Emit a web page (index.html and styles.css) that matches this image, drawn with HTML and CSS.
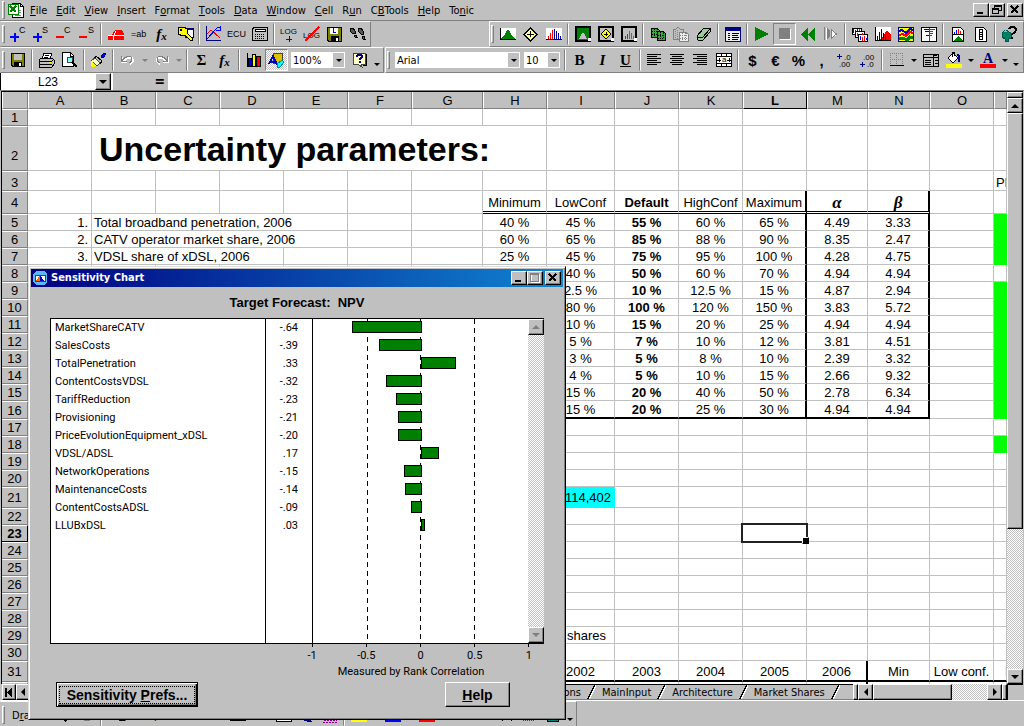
FILE: index.html
```html
<!DOCTYPE html>
<html lang="en">
<head>
<meta charset="utf-8">
<title>Sensitivity Chart</title>
<link rel="stylesheet" href="styles.css">
</head>
<body>
<header class="menubar">
  <i class="grip"></i>
  <svg class="book" width="18" height="16" viewBox="0 0 18 16"><path d="M5 1h8l3 3v11H5z" fill="#fff" stroke="#000"/><path d="M13 1v3h3" fill="none" stroke="#000"/><path d="M1 2h10v10H1z" fill="#fff" stroke="#008000"/><path d="M3 4l6 6M9 4l-6 6" stroke="#008000" stroke-width="2"/><path d="M12 8h2M12 10h2M8 13h6" stroke="#808080"/></svg>
  <nav class="menus">
    <button><u>F</u>ile</button><button><u>E</u>dit</button><button><u>V</u>iew</button><button><u>I</u>nsert</button><button>F<u>o</u>rmat</button><button><u>T</u>ools</button><button><u>D</u>ata</button><button><u>W</u>indow</button><button><u>C</u>ell</button><button>R<u>u</u>n</button><button>C<u>B</u>Tools</button><button><u>H</u>elp</button><button>To<u>n</u>ic</button>
  </nav>
  <div class="winbtns">
    <button aria-label="Minimize" class="bevel"><svg width="12" height="10"><path d="M2 7h6v2H2z"/></svg></button>
    <button aria-label="Restore" class="bevel"><svg width="12" height="10"><path d="M4 .5h6v5H8M4 1.5h6M3.5 0v3M1.500 3.500h6v5h-6zM1 4.500h7" fill="none" stroke="#000"/></svg></button>
    <button aria-label="Close" class="bevel gap"><svg width="12" height="10"><path d="M2 1l7 7M9 1L2 8" stroke="#000" stroke-width="2"/></svg></button>
  </div>
</header>

<div class="toolrow">
  <div class="toolbar">
    <i class="grip"></i>
    <button class="tb" aria-label="Add C"><svg width="18" height="18"><path d="M1 12h9M5.500 8v9" stroke="#00f" stroke-width="2"/><text x="10" y="8" class="t9">C</text></svg></button>
    <button class="tb" aria-label="Add S"><svg width="18" height="18"><path d="M1 12h9M5.500 8v9" stroke="#00f" stroke-width="2"/><text x="10" y="8" class="t9">S</text></svg></button>
    <button class="tb" aria-label="Remove C"><svg width="18" height="18"><path d="M1 12h8" stroke="red" stroke-width="2"/><text x="9" y="8" class="t9">C</text></svg></button>
    <button class="tb" aria-label="Remove S"><svg width="18" height="18"><path d="M1 12h8" stroke="red" stroke-width="2"/><text x="10" y="8" class="t9">S</text></svg></button>
    <i class="sep"></i>
    <button class="tb" aria-label="Fill block"><svg width="16" height="16"><path d="M7 4h7l2 4v6H0V9h4z" fill="red"/><path d="M0 9h16M5 9v5M8 5l-2 4" stroke="#fff"/></svg></button>
    <button class="tb" aria-label="Label"><svg width="18" height="16"><text x="1" y="11" class="t9">=ab</text></svg></button>
    <button class="tb fx" aria-label="Function">f<small>x</small></button>
    <button class="tb" aria-label="Key"><svg width="18" height="16"><path d="M9 2h8v9H9z" fill="#fff" stroke="#000080"/><path d="M10 3h7" stroke="#000080" stroke-width="2"/><path d="M2 1h6l3 2v4l5 5v2h-2l-5-5-2 1-5-2z" fill="#ff0" stroke="#000"/><path d="M4 3h2v2H4z"/></svg></button>
    <i class="sep"></i>
    <button class="tb" aria-label="Line chart"><svg width="17" height="16"><path d="M1.500 0v14.500H16" stroke="#000080" fill="none"/><path d="M2 8l4-4 9 8" stroke="red" fill="none"/><path d="M2 13L12 2l3-1M11 4h4V0" stroke="#00f" fill="none"/></svg></button>
    <button class="tb ecu" aria-label="ECU">ECU</button>
    <button class="tb" aria-label="Calculator"><svg width="16" height="14"><path d="M2 .5h13v13H.5V2z" fill="#c0c0c0" stroke="#000"/><path d="M3 2.500h10v2H3z" fill="#fff" stroke="#000"/><path d="M3 7h10M3 9h10M3 11h10" stroke="#000" stroke-dasharray="1 1"/></svg></button>
    <i class="sep"></i>
    <button class="tb" aria-label="Add log"><svg width="22" height="17"><text x="2" y="8" class="t8">LOG</text><path d="M8 13h6M11 10v6" stroke="#00f"/></svg></button>
    <button class="tb" aria-label="Remove log"><svg width="22" height="16"><text x="2" y="12" class="t8">LOG</text><path d="M4 15L18 1" stroke="red" stroke-width="2"/></svg></button>
    <button class="tb" aria-label="Save log"><svg width="15" height="15"><path d="M.5.500h14v14H2L.5 13z" fill="#808000" stroke="#000"/><path d="M3 1h8v6H3z" fill="#fff"/><path d="M4 9h8v6H4z"/><path d="M6 1v4h3" fill="none" stroke="#00f"/><path d="M9 11h2v3H9z" fill="#fff"/></svg></button>
    <button class="tb" aria-label="Trace"><svg width="17" height="15"><path d="M2 1h2l2 3v2H3L1 4zM5 8h2l1 2H6zM9 1h3l2 3v3h-2L9 4zM13 9h2l1 3h-2z" fill="#555" stroke="#000"/></svg></button>
  </div>
  <div class="toolbar right">
    <i class="grip"></i>
    <button class="tb" aria-label="Define assumption"><svg width="16" height="13"><path d="M0 0h16v11H0z" fill="#fff"/><path d="M0 11c5-1 5-9 8-9s3 8 8 9z" fill="#008000"/><path d="M.5 0v11.500H16" stroke="#000" fill="none"/></svg></button>
    <button class="tb" aria-label="Define decision"><svg width="15" height="15"><path d="M7.500 1L14 7.500 7.500 14 1 7.500z" fill="#ff8" stroke="#000"/><path d="M4 7h7M7.500 4v6" fill="none" stroke="#000"/></svg></button>
    <button class="tb" aria-label="Define forecast"><svg width="16" height="13"><path d="M0 0h16v11H0z" fill="#fff"/><path d="M2 8h1v3H2zM4 5h1v6H4zM6 2h1v9H6z" fill="#f00"/><path d="M8 1h1v10H8zM10 3h1v8h-1zM12 5h1v6h-1zM14 8h1v3h-1z" fill="#0000a0"/><path d="M0 11h16v1H0z"/></svg></button>
    <i class="sep"></i>
    <button class="tb" aria-label="Select assumptions"><svg width="16" height="16"><path d="M1 1h14v14H1z" fill="#008000" stroke="#000" stroke-width="2"/><path d="M3 13c3-1 3-6 5-6s2 5 5 6z" fill="#c0c0c0"/><path d="M13 12h3v3h-3z" fill="#fff"/></svg></button>
    <button class="tb" aria-label="Select decisions"><svg width="16" height="16"><path d="M1 1h14v14H1z" fill="#c0c0c0" stroke="#000" stroke-width="2"/><path d="M8 3l5 5-5 5-5-5z" fill="#ff0" stroke="#000"/><path d="M6 8h4M8 6v4" stroke="#000"/><path d="M13 12h3v3h-3z" fill="#fff"/></svg></button>
    <button class="tb" aria-label="Select forecasts"><svg width="16" height="16"><path d="M1 1h14v14H1z" fill="#c0c0c0" stroke="#000" stroke-width="2"/><path d="M4 10h1v3H4zM6 8h1v5H6z" fill="#008000"/><path d="M8 5h1v8H8zM10 7h1v6h-1zM12 10h1v3h-1z" fill="#f0f"/><path d="M13 12h3v3h-3z" fill="#fff"/></svg></button>
    <i class="sep"></i>
    <button class="tb" aria-label="Copy data"><svg width="16" height="14"><path d="M1 1h5l3 2v7H1z" fill="#3a3" stroke="#000"/><path d="M7 4h5l3 2v7H7z" fill="#3a3" stroke="#000"/><path d="M2 4h6M2 7h5M4 2v7M8 8h6M8 11h6M10 5v7M13 6v6" stroke="#000" stroke-dasharray="1 1"/></svg></button>
    <button class="tb" aria-label="Paste data"><svg width="17" height="16"><path d="M1 3h3l2-2 2 2h3v10H1z" fill="#c0c0c0" stroke="#808080"/><path d="M7 6h6l3 2v7H7z" fill="#eee" stroke="#808080"/><path d="M3 5v7M5 4v9M8 9h7M8 12h7M10 7v8M13 7v8" stroke="#808080" stroke-dasharray="1 1"/></svg></button>
    <button class="tb" aria-label="Clear data"><svg width="16" height="14"><path d="M1 9l7-8h6v4l-7 8H2z" fill="#9c9" stroke="#000"/><path d="M2 10h5l7-8" fill="none" stroke="#000"/></svg></button>
    <i class="sep"></i>
    <button class="tb" aria-label="Preferences"><svg width="16" height="15"><path d="M.5.500h15v14H.5z" fill="#eee" stroke="#000080"/><path d="M0 2h16" stroke="#000080" stroke-width="3"/><path d="M3 6h2M7 6h7M3 8h2M7 8h6M3 10h2M7 10h7M3 12h2M7 12h6" stroke="#000"/></svg></button>
    <i class="sep"></i>
    <button class="tb" aria-label="Run"><svg width="15" height="14"><path d="M1 0l14 7-14 7z" fill="#008000"/></svg></button>
    <button class="tb pressed" aria-label="Stop"><svg width="12" height="12"><path d="M1 1h11v11H1z" fill="#fff"/><path d="M0 0h11v11H0z" fill="#808080"/></svg></button>
    <button class="tb" aria-label="Reset"><svg width="14" height="13"><path d="M7 0v13L0 6.500zM14 0v13L7 6.500z" fill="#008000"/></svg></button>
    <button class="tb" aria-label="Single step"><svg width="15" height="14"><path d="M3 1v12M8 4l6 3-6 4z" stroke="#fff" fill="#fff"/><path d="M1.500 0v13M4 1v11l2-2V3z" stroke="#808080" fill="#808080"/><path d="M8.500 3v8l5-4z" stroke="#808080" fill="none"/></svg></button>
    <i class="sep"></i>
    <button class="tb" aria-label="Forecast windows"><svg width="16" height="15"><g fill="#fff" stroke="#000"><path d="M.5 1.500h9v6h-9z"/><path d="M3.500 4.500h9v6h-9z"/><path d="M6.500 7.500h9v7h-9z"/></g><path d="M1 2h1v4H1zM3 3h1v3H3zM5 2h1v2H5zM8 9h1v4H8zM14 11h1v2h-1z" fill="#00f"/><path d="M7 2h1v2H7zM5 6h1v3H5zM10 6h1v2h-1zM10 10h1v4h-1zM12 9h1v5h-1z" fill="#f00"/></svg></button>
    <button class="tb" aria-label="Overlay chart"><svg width="16" height="14"><path d="M0 0h16v13H0z" fill="#fff"/><path d="M5 13c3-2 5-9 7-9s2 2 4 3v6z" fill="red"/><path d="M2 9h1v4H2zM4 5h1v8H4zM6 2h1v11H6zM8 6h1v7H8zM10 8h1v5h-1z" fill="#000080"/><path d="M.5 0v13.500H16" stroke="#000" fill="none"/></svg></button>
    <button class="tb" aria-label="Trend chart"><svg width="16" height="15"><path d="M.5.500h15v14H.5z" fill="#ff0" stroke="#000080"/><path d="M1 4l3-1 4 3 4-4 3 1" stroke="#00f" stroke-width="2" fill="none"/><path d="M1 8l4-1 3 2 4-4 3 1" stroke="red" stroke-width="2" fill="none"/><path d="M1 12l4-1 4 2 3-3 3 1" stroke="#008000" stroke-width="3" fill="none"/></svg></button>
    <button class="tb" aria-label="Sensitivity chart"><svg width="16" height="15"><path d="M.5.500h15v14H.5z" fill="#fff" stroke="#000"/><path d="M3 2.500h5M4 4.500h4M5 8.500h3" stroke="#000080"/><path d="M9 2.500h5M9 4.500h3M9 6.500h3M9 8.500h2" stroke="#008000"/><path d="M8.500 1v13" stroke="#008000"/></svg></button>
    <i class="sep"></i>
    <button class="tb" aria-label="Create report"><svg width="12" height="15"><path d="M.5.500h8l3 3v11H.5z" fill="#fff" stroke="#000"/><path d="M2 5h1v2H2zM4 3h1v4H4z" fill="#00f"/><path d="M6 2h1v5H6zM8 4h1v3H8z" fill="#f00"/><path d="M1 7.500h10" stroke="#000"/><path d="M1 14l5-5 5 5z" fill="#008000"/></svg></button>
    <button class="tb" aria-label="Extract data"><svg width="12" height="15"><path d="M.5.500h8l3 3v11H.5z" fill="#fff" stroke="#000"/><path d="M4.500 2.500v10h3v-10zM4 5.500h4M4 7.500h4M4 9.500h4" fill="none" stroke="#000"/></svg></button>
    <i class="sep"></i>
    <button class="tb" aria-label="Help"><svg width="17" height="16"><path d="M1 7l4-3 5 3v5l-3 1v2H4v-2L1 11z" fill="#008060" stroke="#055"/><path d="M2 6l2-2 3 2z" fill="#0ff"/><path d="M8 3c1-3 7-3 7 1 0 3-4 3-4 5M11 11v2" fill="none" stroke="#000" stroke-width="2"/></svg></button>
  </div>
</div>

<div class="toolrow">
  <div class="toolbar">
    <i class="grip"></i>
    <button class="tb" aria-label="Save"><svg width="14" height="14"><path d="M.5.500h13v13H2L.5 12z" fill="#808000" stroke="#000"/><path d="M3 1h8v6H3z" fill="#c0c0c0"/><path d="M3 9h8v5H3z"/><path d="M8 10h2v3H8z" fill="#fff"/></svg></button>
    <i class="sep"></i>
    <button class="tb" aria-label="Print"><svg width="17" height="16"><path d="M4 7l2-6h8l-2 6z" fill="#fff" stroke="#000"/><path d="M1 8l2-2h11l2 2v4l-2 3H1z" fill="#c0c0c0" stroke="#000"/><path d="M1 9h13l2-2M1 12h13M7 3h4M6 5h4" stroke="#000" fill="none"/><path d="M11 10h2v1h-2z" fill="#ff0"/></svg></button>
    <button class="tb" aria-label="Print preview"><svg width="17" height="16"><path d="M1.500.500h8l3 3v11h-11z" fill="#fff" stroke="#000"/><path d="M9 1v3h3" fill="none" stroke="#000"/><circle cx="9" cy="8" r="3" fill="#8ff" stroke="#444"/><path d="M11 10l5 5" stroke="#000" stroke-width="2"/></svg></button>
    <i class="sep"></i>
    <button class="tb" aria-label="Format painter"><svg width="17" height="16"><path d="M11 5l3-4 2 1-3 4z" fill="#00f" stroke="#000080"/><path d="M6 4l6 5-2 3-6-5z" fill="#c0c0c0" stroke="#000"/><path d="M5 6l5 5-3 3-6-5z" fill="#ffc" stroke="#444"/><path d="M1 9l5 5-3 1-2-1" fill="#ff0"/></svg></button>
    <i class="sep"></i>
    <button class="tb" aria-label="Undo"><svg width="15" height="10"><path d="M2 2v5h5M3 7c3-5 9-6 10-2 0 2-1 3-3 4" fill="none" stroke="#fff" stroke-width="2"/><path d="M1.500 1v5h5M2 6c3-5 9-6 10-2 0 2-1 3-3 4" fill="none" stroke="#808080"/></svg></button>
    <button class="drop off" aria-label="Undo list"></button>
    <button class="tb" aria-label="Redo"><svg width="15" height="10"><path d="M14 2v5H9M13 7C10 2 4 1 3 5c0 2 1 3 3 4" fill="none" stroke="#fff" stroke-width="2"/><path d="M13.500 1v5h-5M13 6C10 1 4 0 3 4c0 2 1 3 3 4" fill="none" stroke="#808080"/></svg></button>
    <button class="drop off" aria-label="Redo list"></button>
    <i class="sep"></i>
    <button class="tb sigma" aria-label="AutoSum">Σ</button>
    <button class="tb fx" aria-label="Paste function">f<small>x</small></button>
    <i class="sep"></i>
    <button class="tb" aria-label="Chart wizard"><svg width="16" height="16"><path d="M1 1v13h14" fill="none" stroke="#000"/><path d="M2.500 6.500h3v8h-3z" fill="#00f" stroke="#000"/><path d="M6.500 2.500h3v12h-3z" fill="#ff0" stroke="#000"/><path d="M10.500 4.500h4v10h-4z" fill="red" stroke="#000"/></svg></button>
    <button class="tb pressed dither" aria-label="Drawing"><svg width="17" height="16"><path d="M5 2l2-1h7v8l-2 2H5z" fill="#e0c000" stroke="#444"/><path d="M1 12L5 4l4 9M2 10h6" fill="none" stroke="#0000c0" stroke-width="2"/><path d="M9 12l5-4 2 2-4 5H9z" fill="#0ff" stroke="#088"/></svg></button>
    <span class="combo zoom"><select aria-label="Zoom"><option>100%</option></select><i></i></span>
    <button class="tb" aria-label="Office assistant"><svg width="15" height="16"><path d="M1 1h12v11H9l1 3-4-3H1z" fill="#ffc" stroke="#444"/><path d="M14 2v11h-3" fill="none" stroke="#000"/><path d="M5 5c0-3 5-3 5 0 0 1-2 1-2 3M8 9v2" fill="none" stroke="#000080" stroke-width="2"/></svg></button>
    <button class="drop low" aria-label="More buttons"></button>
  </div>
  <div class="toolbar grow">
    <i class="grip"></i>
    <span class="combo font"><select aria-label="Font"><option>Arial</option></select><i></i></span>
    <span class="combo size"><select aria-label="Font size"><option>10</option></select><i></i></span>
    <i class="sep"></i>
    <button class="tb serif" aria-label="Bold"><b>B</b></button>
    <button class="tb serif" aria-label="Italic"><em>I</em></button>
    <button class="tb serif" aria-label="Underline"><u>U</u></button>
    <i class="sep"></i>
    <button class="tb" aria-label="Align left"><svg width="15" height="12"><path d="M0 .5h14M0 2.500h10M0 4.500h14M0 6.500h10M0 8.500h14M0 10.500h10" stroke="#000"/></svg></button>
    <button class="tb" aria-label="Center"><svg width="15" height="12"><path d="M0 .5h14M2 2.500h10M0 4.500h14M2 6.500h10M0 8.500h14M2 10.500h10" stroke="#000"/></svg></button>
    <button class="tb" aria-label="Align right"><svg width="15" height="12"><path d="M0 .5h14M4 2.500h10M0 4.500h14M4 6.500h10M0 8.500h14M4 10.500h10" stroke="#000"/></svg></button>
    <button class="tb" aria-label="Merge and center"><svg width="16" height="14"><path d="M.5.500h15v13H.5z" fill="#fff" stroke="#000"/><path d="M0 3.500h16M0 10.500h16M5.500 0v3M10.500 0v3M5.500 11v3M10.500 11v3M1 7h4M11 7h4M3 5v4M13 5v4" stroke="#000"/><text x="6" y="9" class="t8">a</text></svg></button>
    <i class="sep"></i>
    <button class="tb num">$</button>
    <button class="tb num">€</button>
    <button class="tb num">%</button>
    <button class="tb num">,</button>
    <button class="tb" aria-label="Increase decimal"><svg width="17" height="15"><path d="M1 3.500h5M3.500 1v5" stroke="#000080"/><text x="8" y="7" class="t8">.0</text><text x="3" y="14" class="t8">.00</text></svg></button>
    <button class="tb" aria-label="Decrease decimal"><svg width="17" height="15"><path d="M1 11.500h5M3.500 9v5" stroke="#000080"/><text x="4" y="7" class="t8">.00</text><text x="8" y="14" class="t8">.0</text></svg></button>
    <i class="sep"></i>
    <button class="tb" aria-label="Borders"><svg width="14" height="14"><path d="M.5 0v13M6.500 0v13M12.500 0v13M0 .5h13M0 6.500h13" stroke="#808080" stroke-dasharray="1 1"/><path d="M0 12.500h14" stroke="#000"/></svg></button>
    <button class="drop" aria-label="Border styles"></button>
    <button class="tb" aria-label="Controls"><svg width="16" height="14"><path d="M.5 1.500h15v12H.5z" fill="#c0c0c0" stroke="#000"/><path d="M0 4.500h16M10.500 1v12M2 7.500h6M2 9.500h6M2 11.500h6M11 2.500h3M12 7.500h3M12 10.500h3" stroke="#000"/></svg></button>
    <button class="tb" aria-label="Fill color"><svg width="16" height="16"><path d="M2 6l5-5 5 5-5 5z" fill="#fff" stroke="#000"/><path d="M6 5V0h2v4" fill="none" stroke="#000"/><path d="M11 2c3 0 4 3 3 8h-2V6z" fill="#000080"/><path d="M0 12h16v4H0z" fill="#ff0"/></svg></button>
    <button class="drop" aria-label="Fill colors"></button>
    <button class="tb" aria-label="Font color"><svg width="16" height="16"><text x="3" y="11" class="bigA">A</text><path d="M0 12h16v4H0z" fill="red"/></svg></button>
    <button class="drop" aria-label="Font colors"></button>
    <button class="drop low" aria-label="More buttons"></button>
  </div>
</div>

<div class="formula">
  <input class="name" aria-label="Name box" value="L23">
  <button class="namedrop bevel" aria-label="Names"><i class="arr down"></i></button>
  <button class="eq">=</button>
  <input class="fx-in" aria-label="Formula">
</div>

<main class="work">
  <div class="sheet">
  <table class="grid">
    <colgroup><col class="c26"><col class="c64"><col class="c64"><col class="c64"><col class="c64"><col class="c64"><col class="c64"><col class="c71"><col class="c64"><col class="c68"><col class="c64"><col class="c64"><col class="c64"><col class="c61"><col class="c62"><col class="c64"><col></colgroup>
    <thead><tr><th></th><th>A</th><th>B</th><th>C</th><th>D</th><th>E</th><th>F</th><th>G</th><th>H</th><th>I</th><th>J</th><th>K</th><th class="on">L</th><th>M</th><th>N</th><th>O</th><th></th></tr></thead>
    <tbody>
    <tr><th>1</th><td><td><td><td><td><td><td><td><td><td><td><td><td><td><td><td></tr>
    <tr class="h45"><th>2</th><td></td><td colspan="7" class="title">Uncertainty parameters:</td><td><td><td><td><td><td><td><td></tr>
    <tr class="h20"><th>3</th><td><td><td><td><td><td><td><td><td><td><td><td><td><td><td><td class="l">Pl</td></tr>
    <tr class="h23 heads"><th>4</th><td><td><td><td><td><td><td><td class="d">Minimum</td><td class="d">LowConf</td><td class="d"><b>Default</b></td><td class="d">HighConf</td><td class="d k">Maximum</td><td class="d greek">α</td><td class="d k greek">β</td><td><td></tr>
    <tr><th>5</th><td class="r">1.</td><td colspan="4" class="l">Total broadband penetration, 2006</td><td><td><td>40 %</td><td>45 %</td><td><b>55 %</b></td><td>60 %</td><td class="k">65 %</td><td>4.49</td><td class="k">3.33</td><td><td class="g"></tr>
    <tr><th>6</th><td class="r">2.</td><td colspan="4" class="l">CATV operator market share, 2006</td><td><td><td>60 %</td><td>65 %</td><td><b>85 %</b></td><td>88 %</td><td class="k">90 %</td><td>8.35</td><td class="k">2.47</td><td><td class="g"></tr>
    <tr><th>7</th><td class="r">3.</td><td colspan="3" class="l">VDSL share of xDSL, 2006</td><td><td><td><td>25 %</td><td>45 %</td><td><b>75 %</b></td><td>95 %</td><td class="k">100 %</td><td>4.28</td><td class="k">4.75</td><td><td class="g"></tr>
    <tr><th>8</th><td><td><td><td><td><td><td><td><td>40 %</td><td><b>50 %</b></td><td>60 %</td><td class="k">70 %</td><td>4.94</td><td class="k">4.94</td><td><td></tr>
    <tr><th>9</th><td><td><td><td><td><td><td><td><td>2.5 %</td><td><b>10 %</b></td><td>12.5 %</td><td class="k">15 %</td><td>4.87</td><td class="k">2.94</td><td><td class="g"></tr>
    <tr><th>10</th><td><td><td><td><td><td><td><td><td>80 %</td><td><b>100 %</b></td><td>120 %</td><td class="k">150 %</td><td>3.83</td><td class="k">5.72</td><td><td class="g"></tr>
    <tr><th>11</th><td><td><td><td><td><td><td><td><td>10 %</td><td><b>15 %</b></td><td>20 %</td><td class="k">25 %</td><td>4.94</td><td class="k">4.94</td><td><td class="g"></tr>
    <tr><th>12</th><td><td><td><td><td><td><td><td><td>5 %</td><td><b>7 %</b></td><td>10 %</td><td class="k">12 %</td><td>3.81</td><td class="k">4.51</td><td><td class="g"></tr>
    <tr><th>13</th><td><td><td><td><td><td><td><td><td>3 %</td><td><b>5 %</b></td><td>8 %</td><td class="k">10 %</td><td>2.39</td><td class="k">3.32</td><td><td class="g"></tr>
    <tr><th>14</th><td><td><td><td><td><td><td><td><td>4 %</td><td><b>5 %</b></td><td>10 %</td><td class="k">15 %</td><td>2.66</td><td class="k">9.32</td><td><td class="g"></tr>
    <tr><th>15</th><td><td><td><td><td><td><td><td><td>15 %</td><td><b>20 %</b></td><td>40 %</td><td class="k">50 %</td><td>2.78</td><td class="k">6.34</td><td><td class="g"></tr>
    <tr class="h18"><th>16</th><td><td><td><td><td><td><td><td class="u"><td class="u">15 %</td><td class="u"><b>20 %</b></td><td class="u">25 %</td><td class="u k">30 %</td><td class="u">4.94</td><td class="u k">4.94</td><td><td class="g"></tr>
    <tr><th>17</th><td><td><td><td><td><td><td><td><td><td><td><td><td><td><td><td></tr>
    <tr><th>18</th><td><td><td><td><td><td><td><td><td><td><td><td><td><td><td><td class="g"></tr>
    <tr><th>19</th><td><td><td><td><td><td><td><td><td><td><td><td><td><td><td><td></tr>
    <tr><th>20</th><td><td><td><td><td><td><td><td><td><td><td><td><td><td><td><td></tr>
    <tr class="h21"><th>21</th><td><td><td><td><td><td><td><td><td class="r cyan">114,402</td><td><td><td><td><td><td><td></tr>
    <tr><th>22</th><td><td><td><td><td><td><td><td><td><td><td><td><td><td><td><td></tr>
    <tr><th class="on">23</th><td><td><td><td><td><td><td><td><td><td><td><td class="cursor"><td><td><td><td></tr>
    <tr><th>24</th><td><td><td><td><td><td><td><td><td><td><td><td><td><td><td><td></tr>
    <tr><th>25</th><td><td><td><td><td><td><td><td><td><td><td><td><td><td><td><td></tr>
    <tr><th>26</th><td><td><td><td><td><td><td><td><td><td><td><td><td><td><td><td></tr>
    <tr><th>27</th><td><td><td><td><td><td><td><td><td><td><td><td><td><td><td><td></tr>
    <tr><th>28</th><td><td><td><td><td><td><td><td><td><td><td><td><td><td><td><td></tr>
    <tr><th>29</th><td><td><td><td><td><td><td><td><td class="r wide">shares</td><td><td><td><td><td><td><td></tr>
    <tr><th>30</th><td><td><td><td><td><td><td><td><td><td><td><td><td><td><td><td></tr>
    <tr class="h21 years"><th>31</th><td><td><td><td><td><td><td><td><td>2002</td><td>2003</td><td>2004</td><td>2005</td><td class="k">2006</td><td>Min</td><td>Low conf.</td><td class="end">H</td></tr>
    <tr><th></th><td><td><td><td><td><td><td><td><td><td><td><td><td class="k"><td><td><td></tr>
    </tbody>
  </table>
  </div>
  <div class="vscroll">
    <i class="split bevel"></i>
    <button class="sbtn bevel" aria-label="Scroll up"><i class="arr up"></i></button>
    <i class="vthumb bevel"></i><i class="vtrack"></i>
    <button class="sbtn bevel" aria-label="Scroll down"><i class="arr down"></i></button>
  </div>
</main>

<div class="tabrow">
  <button class="nav bevel" aria-label="First sheet"><svg width="10" height="9"><path d="M1 0h2v9H1zM8 0v9L3 4.500z"/></svg></button>
  <button class="nav bevel" aria-label="Previous sheet"><i class="arr left"></i></button>
  <div class="tabs">
    <button class="first">Assumptions</button><i class="slant"></i><button>MainInput</button><i class="slant"></i><button>Architecture</button><i class="slant"></i><button>Market Shares</button><i class="slant"></i>
  </div>
  <div class="hscroll">
    <i class="hsplit bevel"></i>
    <button class="sbtn bevel" aria-label="Scroll left"><i class="arr left"></i></button>
    <i class="hthumb bevel"></i><i class="htrack"></i>
    <button class="sbtn bevel" aria-label="Scroll right"><i class="arr rt"></i></button>
    <i class="hsplit bevel"></i>
  </div>
  <i class="corner"></i>
</div>

<footer class="drawrow">
  <div class="toolbar">
    <i class="grip"></i>
    <button class="word draw">D<u>r</u>aw</button>
    <button class="tb" aria-label="Select objects"><svg width="16" height="16"><path d="M5 1l7 7-3 1 2 5-2 1-2-5-2 2z"/></svg></button>
    <button class="tb" aria-label="Rotate"><svg width="16" height="16"><circle cx="8" cy="8" r="6" fill="#fff" stroke="#808080"/></svg></button>
    <i class="sep"></i>
    <button class="word shapes">A<u>u</u>toShapes</button>
    <button class="tb" aria-label="Line"></button>
    <button class="tb" aria-label="Arrow"></button>
    <button class="tb" aria-label="Rectangle"><svg width="16" height="16"><path d="M.5 2.500h15v11H.5z" fill="none" stroke="#000"/></svg></button>
    <button class="tb" aria-label="Oval"></button>
    <button class="tb" aria-label="Text box"><svg width="16" height="16"><path d="M.5 1.500h15v13H.5z" fill="#fff" stroke="#000"/></svg></button>
    <button class="tb" aria-label="WordArt"><svg width="16" height="16"><path d="M2 12l5-9 6 12h-4z" fill="#000080"/></svg></button>
    <button class="tb" aria-label="Clip art"><svg width="16" height="16"><path d="M1 15h14M2 13h13" stroke="#808" stroke-dasharray="2 1"/></svg></button>
    <i class="sep"></i>
    <button class="tb" aria-label="Fill"><svg width="16" height="16"><path d="M0 11h16v4H0z" fill="#ff0"/></svg></button><button class="drop" aria-label="Fill menu"></button>
    <button class="tb" aria-label="Line color"><svg width="16" height="16"><path d="M0 11h16v4H0z" fill="#00f"/></svg></button><button class="drop" aria-label="Line menu"></button>
    <button class="tb" aria-label="Text color"><svg width="16" height="16"><path d="M0 11h16v4H0z" fill="red"/></svg></button><button class="drop" aria-label="Text menu"></button>
    <button class="tb" aria-label="Line style"></button>
    <button class="tb" aria-label="Dash style"></button>
    <button class="tb" aria-label="Arrow style"><svg width="16" height="16"><path d="M4 9v5l-4-2zM12 9v5l4-2z"/></svg></button>
    <button class="tb" aria-label="Shadow"><svg width="16" height="16"><path d="M1 13h11" stroke="#444" stroke-width="2" stroke-dasharray="1 1"/></svg></button>
    <button class="tb" aria-label="3-D"><svg width="16" height="16"><path d="M2 6h11v8H2z" fill="#008080" stroke="#000"/></svg></button>
    <button class="drop low" aria-label="More buttons"></button>
  </div>
</footer>

<section class="dialog" role="dialog" aria-labelledby="dlg">
  <div class="caption">
    <svg width="14" height="14"><path d="M3 0h8l3 3v8l-3 3H3l-3-3V3z" fill="#58b8f8"/><path d="M2 4h10v6H2z" fill="#fff" stroke="#345"/><path d="M3 10l4-6v6z" fill="#f60"/><path d="M7 10V4l4 6z" fill="#00c"/></svg>
    <h2 id="dlg">Sensitivity Chart</h2>
    <button aria-label="Minimize" class="bevel"><svg width="12" height="10"><path d="M2 7h6v2H2z"/></svg></button>
    <button aria-label="Maximize" class="bevel"><svg width="12" height="10"><path d="M2.500 1.500h8v8h-8z" fill="none" stroke="#fff"/><path d="M1.500.500h8v8h-8zM1 1.500h9" fill="none" stroke="#808080"/></svg></button>
    <button aria-label="Close" class="bevel gap"><svg width="12" height="10"><path d="M2 1l7 7M9 1L2 8" stroke="#000" stroke-width="2"/></svg></button>
  </div>
  <h3>Target Forecast:&nbsp; NPV</h3>
  <div class="chart">
    <div class="plotwrap">
    <div class="rows">
      <div class="row"><span>MarketShareCATV</span><span>-.64</span><div class="cell"><i style="margin-left:18%;width:32.500%"></i></div></div>
      <div class="row"><span>SalesCosts</span><span>-.39</span><div class="cell"><i style="margin-left:30.500%;width:20%"></i></div></div>
      <div class="row"><span>TotalPenetration</span><span>.33</span><div class="cell"><i style="margin-left:50%;width:16.500%"></i></div></div>
      <div class="row"><span>ContentCostsVDSL</span><span>-.32</span><div class="cell"><i style="margin-left:34%;width:16.500%"></i></div></div>
      <div class="row"><span>TariffReduction</span><span>-.23</span><div class="cell"><i style="margin-left:38.500%;width:12%"></i></div></div>
      <div class="row"><span>Provisioning</span><span>-.21</span><div class="cell"><i style="margin-left:39.500%;width:11%"></i></div></div>
      <div class="row"><span>PriceEvolutionEquipment_xDSL</span><span>-.20</span><div class="cell"><i style="margin-left:39.500%;width:11%"></i></div></div>
      <div class="row"><span>VDSL/ADSL</span><span>.17</span><div class="cell"><i style="margin-left:50%;width:8.800%"></i></div></div>
      <div class="row"><span>NetworkOperations</span><span>-.15</span><div class="cell"><i style="margin-left:42.200%;width:8.300%"></i></div></div>
      <div class="row"><span>MaintenanceCosts</span><span>-.14</span><div class="cell"><i style="margin-left:43%;width:7.500%"></i></div></div>
      <div class="row"><span>ContentCostsADSL</span><span>-.09</span><div class="cell"><i style="margin-left:45.500%;width:5%"></i></div></div>
      <div class="row"><span>LLUBxDSL</span><span>.03</span><div class="cell"><i style="margin-left:50%;width:2%"></i></div></div>
      <div class="row rest"><span></span><span></span><div class="cell"></div></div>
    </div>
    <div class="cscroll">
      <button class="sbtn bevel" aria-label="Scroll up"><i class="arr up dim"></i></button>
      <i class="vtrack"></i>
      <button class="sbtn bevel" aria-label="Scroll down"><i class="arr down dim"></i></button>
    </div>
    </div>
    <div class="axis"><span>-1</span><span>-0.5</span><span>0</span><span>0.5</span><span>1</span></div>
    <p>Measured by Rank Correlation</p>
  </div>
  <div class="actions">
    <button class="cmd default"><span>Sensitivity <u>P</u>refs...</span></button>
    <button class="cmd"><span><u>H</u>elp</span></button>
  </div>
</section>
</body>
</html>
```
FILE: styles.css
```css
* { box-sizing: border-box; }
:root { --ui: "DejaVu Sans Condensed", "Noto Sans", sans-serif; --face: #c0c0c0; }
body {
  margin: 0; height: 100vh; overflow: hidden; position: relative;
  display: flex; flex-direction: column;
  background: var(--face); color: #000; font: 11px/13px var(--ui);
}
button { border: 0; padding: 0; background: none; color: inherit; font: inherit; display: flex; align-items: center; justify-content: center; flex: none; }
svg { display: block; shape-rendering: crispEdges; flex: none; }
i { font-style: normal; display: block; flex: none; }
.bevel { background: var(--face); border: 1px solid; border-color: #fff #000 #000 #fff; box-shadow: inset -1px -1px #808080; }

/* menu bar */
.menubar { display: flex; align-items: center; height: 21px; border-bottom: 1px solid #808080; flex: none; }
.grip { width: 3px; height: 18px; margin: 0 2px; border: 1px solid; border-color: #fff #808080 #808080 #fff; }
.menus { display: flex; gap: 9px; margin-left: 5px; flex: 1; }
.winbtns { display: flex; padding-right: 1px; }
.winbtns button, .caption button { width: 16px; height: 14px; }
.winbtns .gap, .caption .gap { margin-left: 2px; }

/* toolbars */
.toolrow { display: flex; height: 26px; flex: none; }
.toolbar { display: flex; align-items: center; border: 1px solid; border-color: #fff #808080 #808080 transparent; padding-right: 1px; }
.toolbar .grip { margin: 0 1px; }
.toolbar.right { margin-left: auto; border-left-color: #fff; padding-right: 2px; }
.toolbar.grow { flex: 1; border-left-color: #fff; margin-left: 1px; }
.toolbar.right .grip, .toolbar.grow .grip { margin: 0 2px 0 1px; }
.tb { width: 23px; height: 22px; }
.sep { width: 2px; height: 22px; margin: 0 2px; border: 1px solid; border-color: transparent #fff transparent #808080; }
.pressed { border: 1px solid; border-color: #808080 #fff #fff #808080; }
.dither, .vtrack, .htrack { background: repeating-conic-gradient(#fff 0 25%, #c0c0c0 0 50%) 0 0 / 2px 2px; }
.drop { width: 11px; height: 22px; }
.drop::before { content: ""; border: 3px solid transparent; border-top-color: #000; border-bottom: 0; }
.drop.off::before { border-top-color: #808080; }
.drop.low { align-items: flex-end; padding-bottom: 5px; }
.t9 { font: 9px "Liberation Sans", sans-serif; }
.t8 { font: 8px "Liberation Sans", sans-serif; }
.bigA { font: bold 14px "Liberation Serif", serif; fill: #000080; }
.fx { font: italic bold 15px/16px "Liberation Serif", serif; align-items: center; }
.fx small { font-size: 11px; padding-top: 4px; }
.sigma { font: bold 15px "Liberation Serif", serif; }
.serif { font: 15px "Liberation Serif", serif; font-weight: bold; }
.num { font: bold 15px "Liberation Sans", sans-serif; }
.ecu { font: 9px "Liberation Sans", sans-serif; }
.combo { display: flex; height: 16px; background: #fff; margin: 0 3px; padding: 1px; }
.combo select { appearance: none; border: 0; padding: 0 0 0 1px; background: none; font: 11px/13px var(--ui); flex: 1; min-width: 0; }
.combo i { width: 11px; background: var(--face); display: flex; align-items: center; justify-content: center; }
.combo i::before { content: ""; border: 3px solid transparent; border-top-color: #000; border-bottom: 0; }
.zoom { width: 54px; }
.font { width: 125px; margin-right: 2px; }
.size { width: 36px; margin: 0 2px; }

/* formula bar */
.formula { display: flex; height: 17px; flex: none; border-left: 1px solid #000; }
.formula input { border: 0; padding: 0; outline: 0; background: #fff; font: 12px/14px "Liberation Sans", sans-serif; border-radius: 0; }
.name { width: 94px; text-align: center; }
.namedrop { width: 16px; }
.eq { width: 57px; font-weight: bold; font-size: 14px; justify-content: flex-end; padding-right: 3px; border-left: 2px solid #fff; }
.fx-in { flex: 1; min-width: 0; }

/* worksheet */
.work { flex: 1; min-height: 0; display: flex; border-top: 1px solid #808080; padding-right: 1px; }
.sheet { flex: 1; min-width: 0; overflow: hidden; border-top: 1px solid #000; border-left: 1px solid #000; margin-left: 1px; background: #fff; }
.grid { table-layout: fixed; width: 100%; border-collapse: separate; border-spacing: 0; font: 13px/15px "Liberation Sans", sans-serif; }
.c26 { width: 26px; } .c61 { width: 61px; } .c62 { width: 62px; } .c64 { width: 64px; } .c68 { width: 68px; } .c71 { width: 71px; }
.grid tr { height: 17px; }
.grid .h18 { height: 18px; } .grid .h20 { height: 20px; } .grid .h21 { height: 21px; } .grid .h23 { height: 23px; } .grid .h45 { height: 45px; }
.grid td, .grid th { padding: 0; overflow: hidden; white-space: nowrap; line-height: 14px; vertical-align: bottom; }
.grid td { border: 1px solid #c0c0c0; border-width: 0 1px 1px 0; text-align: center; }
.grid th { background: var(--face); font-weight: normal; border: 1px solid; border-color: #fff #808080 #808080 #fff; border-left-width: 0; }
.grid thead th { border-width: 0 1px 1px 1px; }
.grid tbody th { line-height: 15px; }
.grid tbody .h21 th { line-height: 18px; }
.grid tbody .h23 th { line-height: 21px; }
.grid tbody .h45 th { line-height: 28px; }
.grid th.on { font-weight: bold; border-right-color: #000; border-bottom-color: #000; }
.grid .title { font-size: 34px; font-weight: bold; line-height: 42px; text-align: left; padding-left: 7px; }
.grid .l { text-align: left; padding-left: 2px; }
.grid .r { text-align: right; padding-right: 3px; }
.grid .wide { padding-right: 8px; }
.grid .d { border-bottom: 3px double #000; }
.grid .k { border-right: 2px solid #000; }
.grid .u { border-bottom: 2px solid #000; }
.grid .heads td { line-height: 16px; }
.grid .greek { font: italic bold 17px/18px "Liberation Serif", serif; }
.grid .g { background: #0f0; border-color: #0f0; }
.grid .cyan { background: #0ff; border-color: #0ff; line-height: 18px; }
.grid .years td { border-bottom: 2px solid #000; line-height: 17px; }
.grid .end { text-align: left; padding-left: 11px; }
.grid .cursor { position: relative; overflow: visible; }
.cursor::before { content: ""; position: absolute; inset: -2px; border: 2px solid #222; }
.cursor::after { content: ""; position: absolute; right: -3px; bottom: -3px; width: 5px; height: 5px; background: #000; border: 1px solid; border-color: #fff #000 #000 #fff; }

/* scroll bars */
.vscroll { width: 16px; display: flex; flex-direction: column; border-top: 1px solid #000; }
.split { height: 6px; }
.sbtn { width: 16px; height: 16px; }
.vscroll .sbtn { height: 15px; }
.vthumb { flex: 416; }
.vtrack { flex: 141; }
.arr { border: 4px solid transparent; }
.arr.up { border-bottom-color: #000; border-top: 0; }
.arr.down { border-top-color: #000; border-bottom: 0; }
.arr.left { border-right-color: #000; border-left: 0; }
.arr.rt { border-left-color: #000; border-right: 0; }
.arr.dim.up { border-bottom-color: #808080; }
.arr.dim.down { border-top-color: #808080; }

.tabrow { display: flex; height: 16px; flex: none; padding: 0 1px 0 2px; }
.nav { width: 14px; }
.tabs { flex: 1; min-width: 0; overflow: hidden; display: flex; border-bottom: 1px solid #808080; border-top: 1px solid #000; }
.tabs .first { width: 551px; justify-content: flex-end; }
.slant { width: 9px; margin: 0 6px; background: linear-gradient(116deg, transparent 44%, #000 44% 54%, #fff 54% 62%, transparent 62%); }
.hscroll { width: 154px; display: flex; }
.hscroll .sbtn { width: 15px; }
.hsplit { width: 5px; }
.hthumb { flex: 78; }
.htrack { flex: 36; }
.corner { width: 16px; border-top: 1px solid #000; border-left: 1px solid #000; }

.drawrow { display: flex; height: 26px; flex: none; border-top: 1px solid #fff; }
.drawrow .toolbar { padding-top: 2px; border-bottom: 0; }
.word { height: 22px; }
.draw { width: 46px; justify-content: flex-start; padding-left: 6px; }
.shapes { width: 76px; }

/* dialog window */
.dialog {
  position: absolute; left: 28px; top: 266px; width: 538px; background: var(--face);
  border: 1px solid; border-color: #dfdfdf #000 #000 #dfdfdf; box-shadow: inset 1px 1px #fff, inset -1px -1px #808080;
  padding: 2px 2px 12px; font: 11px/13px Roboto, sans-serif;
}
.caption { display: flex; align-items: center; height: 18px; padding: 0 2px; background: linear-gradient(90deg, #000080, #1084d0); color: #fff; }
.caption h2 { flex: 1; margin: 0 0 0 4px; font: bold 11px/14px var(--ui); }
.dialog h3 { margin: 7px 0; font: bold 13px/17px "Liberation Sans", sans-serif; text-align: center; }
.chart { margin: 0 19px; }
.plotwrap { display: flex; height: 326px; border: 1px solid #000; border-right: 0; background: #fff; }
.rows { flex: 1; display: flex; flex-direction: column; }
.row { display: grid; grid-template-columns: 215px 47px 1fr; height: 18px; line-height: 18px; }
.row.rest { flex: 1; }
.row span { padding-left: 4px; border-right: 1px solid #000; }
.row span + span { padding: 0 14px 0 0; text-align: right; }
.cell {
  padding-top: 2px; --dash: repeating-linear-gradient(#000 0 5px, transparent 5px 9px);
  background: var(--dash) 25% 0 / 1px 100% no-repeat, var(--dash) 50% 0 / 1px 100% no-repeat, var(--dash) 75% 0 / 1px 100% no-repeat;
}
.cell i { height: 12px; background: #008000; border: 1px solid #000; }
.cscroll { width: 16px; display: flex; flex-direction: column; }
.cscroll .vtrack { flex: 1; }
.axis { display: grid; grid-template-columns: repeat(5, 1fr); margin: 0 -12px 0 235px; text-align: center; }
.axis span::before { content: ""; display: block; width: 1px; height: 3px; margin: 0 auto 2px; background: #000; }
.chart p { margin: 3px 0 0 228px; width: 266px; text-align: center; }
.actions { display: flex; justify-content: space-between; padding: 4px 53px 0 25px; }
.cmd { height: 25px; width: 65px; border: 1px solid; border-color: #fff #000 #000 #fff; box-shadow: inset -1px -1px #808080; font: bold 14px "Liberation Sans", sans-serif; }
.default { width: 142px; border: 1px solid #000; box-shadow: inset 1px 1px #fff, inset -1px -1px #000, inset -2px -2px #808080; }
.default span { border: 1px dotted #000; padding: 0 7px; line-height: 16px; white-space: nowrap; }
```
